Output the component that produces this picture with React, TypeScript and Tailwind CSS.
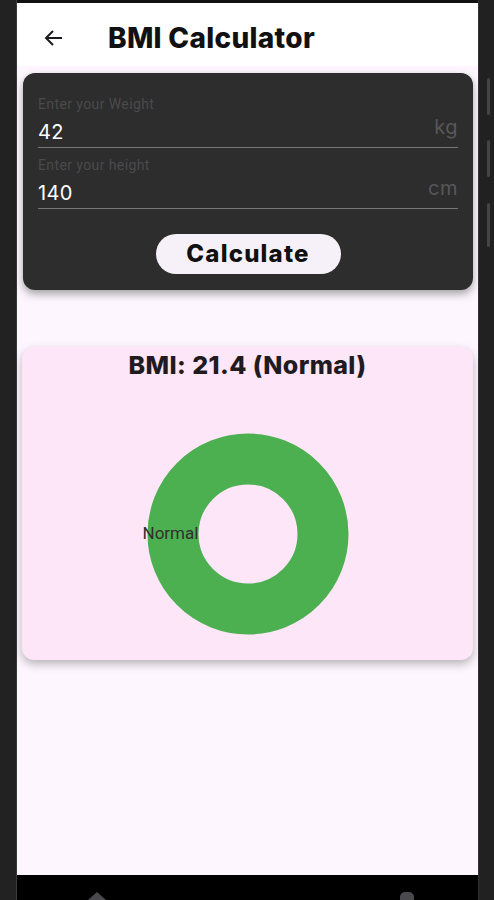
import React from "react";

const poppins = { fontFamily: "Inter, 'Noto Sans', sans-serif" };

const Field = ({ label, value, unit }: { label: string; value: string; unit: string }) => (
  <div className="flex flex-col pt-[1px]">
    <p className="text-[14px] leading-[16px] text-[#4a4a4c] font-['Roboto',sans-serif] tracking-[0.4px]">
      {label}
    </p>
    <div className="flex items-end justify-between h-[36px] border-b border-[#77767a]">
      <span className="text-[20px] leading-[28px] text-white pb-[1px] font-['Inter',sans-serif] tracking-[0.3px]">{value}</span>
      <span className="text-[20px] leading-[28px] text-[#58575b] pb-[6px] font-['Inter',sans-serif] tracking-[0.5px]">{unit}</span>
    </div>
  </div>
);

const Donut = () => (
  <div className="relative flex items-center justify-center">
    <svg width="202" height="202" viewBox="0 0 202 202">
      <circle cx="101" cy="101" r="75" fill="none" stroke="#4caf50" strokeWidth="51" />
    </svg>
    <span className="absolute left-[-4px] top-[90px] text-[17px] leading-[20px] text-[#2f2f2f] font-['Roboto',sans-serif]">
      Normal
    </span>
  </div>
);

export default function App() {
  return (
    <div className="flex w-[494px] h-[900px] bg-[#1e1e1e] overflow-hidden">
      {/* left bezel */}
      <div className="w-[17px] h-full bg-[#222222] border-r border-[#3a3a3a]" />

      {/* screen */}
      <div className="flex flex-col w-[461px] h-full">
        <div className="h-[3px] bg-[#111111]" />

        {/* app bar */}
        <div className="flex items-center h-[63px] bg-white pl-[25px] pt-[6px]">
          <svg width="24" height="24" viewBox="0 0 24 24" fill="none" stroke="#1d1b20" strokeWidth="2">
            <path d="M20 12H4M11 5l-7 7 7 7" />
          </svg>
          <h1 style={poppins} className="ml-[42px] text-[28px] leading-[34px] font-extrabold text-[#111111] tracking-[0.3px]">
            BMI Calculator
          </h1>
        </div>

        {/* body */}
        <div className="flex flex-col flex-1 bg-[#fdf6fe] pt-[7px] pl-[6px] pr-[5px]">
          <div className="flex flex-col rounded-[12px] bg-[#2d2d2d] shadow-[0_4px_8px_rgba(0,0,0,0.35)] px-[15px] pt-[22px] pb-[16px]">
            <Field label="Enter your Weight" value="42" unit="kg" />
            <div className="h-[8px]" />
            <Field label="Enter your height" value="140" unit="cm" />
            <div className="flex justify-center mt-[25px]">
              <button
                style={poppins}
                className="w-[185px] h-[40px] rounded-full bg-[#f6f1f8] text-[24px] font-extrabold text-[#111111] tracking-[1.2px]"
              >
                Calculate
              </button>
            </div>
          </div>

          <div className="flex flex-col items-center mt-[57px] h-[313px] rounded-[12px] bg-[#fde6f8] shadow-[0_4px_10px_rgba(0,0,0,0.28)] -ml-[1px]">
            <p style={poppins} className="mt-[3px] text-[25px] leading-[30px] font-extrabold text-[#1f1b20] tracking-[0.4px]">
              BMI: 21.4 (Normal)
            </p>
            <div className="mt-[53px]">
              <Donut />
            </div>
          </div>
        </div>

        {/* system nav */}
        <div className="flex h-[25px] bg-black pt-[17px]">
          <div className="ml-[71px] w-0 h-0 border-l-[9px] border-r-[9px] border-b-[8px] border-l-transparent border-r-transparent border-b-[#4a4a4e]" />
          <div className="ml-[294px] w-[14px] h-[8px] rounded-t-[5px] bg-[#4a4a4e]" />
        </div>
      </div>

      {/* right bezel with side buttons */}
      <div className="flex flex-col items-end w-[16px] h-full bg-[#212121] border-l border-[#333333] pr-[4px]">
        <div className="mt-[78px] w-[3px] h-[37px] rounded-full bg-[#444444]" />
        <div className="mt-[25px] w-[3px] h-[37px] rounded-full bg-[#444444]" />
        <div className="mt-[26px] w-[3px] h-[44px] rounded-full bg-[#444444]" />
      </div>
    </div>
  );
}
